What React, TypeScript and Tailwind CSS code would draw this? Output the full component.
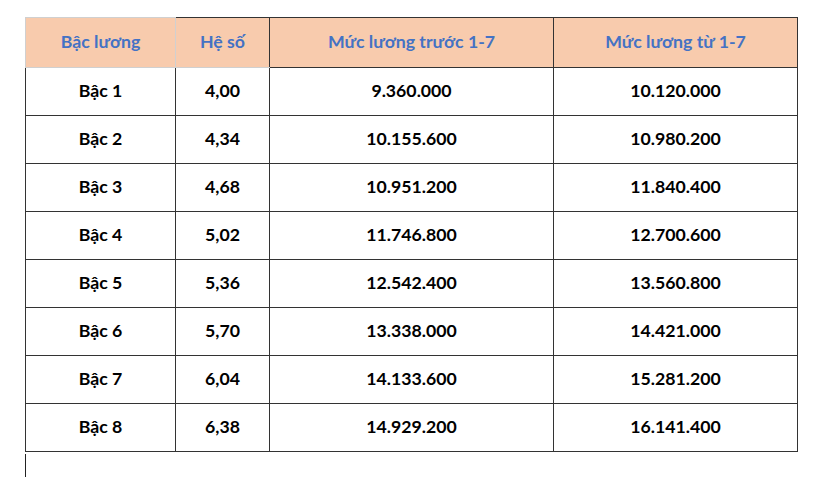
import React from "react"

const rows = [
  ["Bậc 1", "4,00", "9.360.000", "10.120.000"],
  ["Bậc 2", "4,34", "10.155.600", "10.980.200"],
  ["Bậc 3", "4,68", "10.951.200", "11.840.400"],
  ["Bậc 4", "5,02", "11.746.800", "12.700.600"],
  ["Bậc 5", "5,36", "12.542.400", "13.560.800"],
  ["Bậc 6", "5,70", "13.338.000", "14.421.000"],
  ["Bậc 7", "6,04", "14.133.600", "15.281.200"],
  ["Bậc 8", "6,38", "14.929.200", "16.141.400"],
]

export default function App() {
  return (
    <div
      className="w-[820px] h-[484px] bg-white pl-[25px] pt-[17px]"
      style={{ fontFamily: "Lato, 'Open Sans', sans-serif" }}
    >
      <table className="table-fixed border-collapse w-[772px] text-[17.7px] font-bold">
        <colgroup>
          <col className="w-[150px]" />
          <col className="w-[94px]" />
          <col className="w-[284px]" />
          <col className="w-[244px]" />
        </colgroup>
        <thead>
          <tr className="h-[50px] bg-[#f8cbad] text-[#4472c4]">
            <th className="border border-[#d0d0d0] font-bold">Bậc lương</th>
            <th className="border border-[#d0d0d0] border-t-[#333] border-r-[#333] font-bold">Hệ số</th>
            <th className="border border-[#333] font-bold">Mức lương trước 1-7</th>
            <th className="border border-[#333] font-bold">Mức lương từ 1-7</th>
          </tr>
        </thead>
        <tbody className="text-black">
          {rows.map((r) => (
            <tr key={r[0]} className="h-[48px]">
              {r.map((c, i) => (
                <td key={i} className="border border-[#333] text-center">
                  {c}
                </td>
              ))}
            </tr>
          ))}
        </tbody>
      </table>
      <div className="w-px h-[23px] bg-[#222] mt-[2px]" />
    </div>
  )
}
